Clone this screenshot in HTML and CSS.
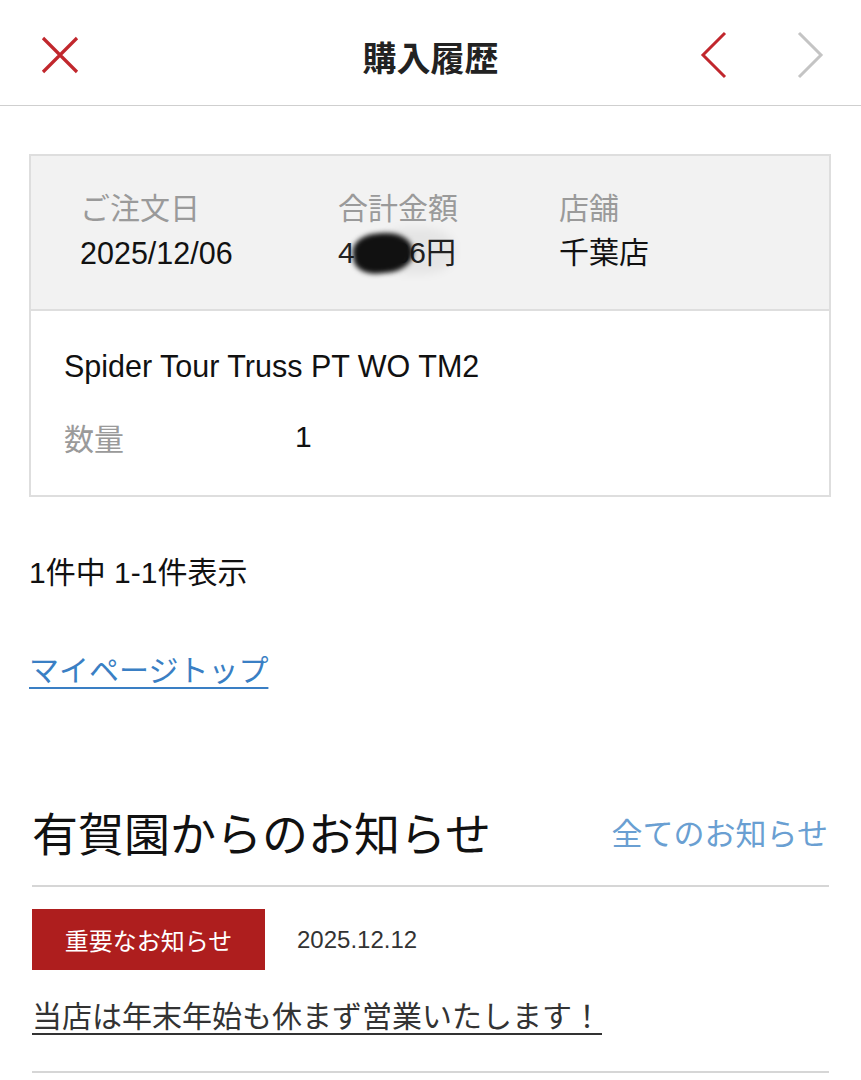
FILE: index.html
```html
<!DOCTYPE html>
<html lang="ja">
<head>
<meta charset="utf-8">
<link rel="stylesheet" href="styles.css">
</head>
<body>
<header class="topbar">
  <span class="icon-close">
    <svg width="38" height="38" viewBox="0 0 38 38"><path d="M2 2 L36 36 M36 2 L2 36" stroke="#c1272d" stroke-width="3.2" fill="none"/></svg>
  </span>
  <h1 class="title">購入履歴</h1>
  <div class="nav">
    <svg width="28" height="48" viewBox="0 0 28 48"><path d="M25 2 L3 24 L25 46" stroke="#c1272d" stroke-width="3" fill="none"/></svg>
    <svg width="28" height="48" viewBox="0 0 28 48"><path d="M3 2 L25 24 L3 46" stroke="#c4c4c4" stroke-width="3" fill="none"/></svg>
  </div>
</header>

<main class="content">
  <section class="order">
    <div class="order-head">
      <div class="col col-date">
        <div class="label">ご注文日</div>
        <div class="value">2025/12/06</div>
      </div>
      <div class="col col-total">
        <div class="label">合計金額</div>
        <div class="value"><span class="amount">4<span class="gap"></span>36円<span class="smudge"></span><span class="blob"></span></span></div>
      </div>
      <div class="col col-store">
        <div class="label">店舗</div>
        <div class="value">千葉店</div>
      </div>
    </div>
    <div class="order-body">
      <div class="product">Spider Tour Truss PT WO TM2</div>
      <div class="qty-row"><span class="label qty-label">数量</span><span class="qty">1</span></div>
    </div>
  </section>

  <p class="count">1件中 1-1件表示</p>
  <a class="mypage" href="#">マイページトップ</a>

  <section class="news">
    <div class="news-head">
      <h2 class="news-title">有賀園からのお知らせ</h2>
      <a class="news-all" href="#">全てのお知らせ</a>
    </div>
    <div class="news-item">
      <div class="news-meta">
        <span class="badge">重要なお知らせ</span>
        <span class="news-date">2025.12.12</span>
      </div>
      <a class="news-link" href="#">当店は年末年始も休まず営業いたします！</a>
    </div>
  </section>
</main>
</body>
</html>
```

FILE: styles.css
```css
* { box-sizing: border-box; }
html, body { margin: 0; padding: 0; background: #fff; }
body {
  width: 861px;
  font-family: "Liberation Sans", "Noto Sans CJK JP", sans-serif;
  color: #111;
}

.topbar {
  height: 106px;
  border-bottom: 1px solid #cfcfcf;
  display: flex;
  align-items: center;
  justify-content: space-between;
  padding: 0 37px 0 41px;
  position: relative;
}
.icon-close { display: flex; margin-top: 4px; }
.title {
  position: absolute;
  left: 0; right: 0;
  top: 34px;
  text-align: center;
  margin: 0;
  font-size: 34px;
  line-height: 46px;
  font-weight: 700;
  color: #222;
  font-family: "Noto Sans CJK JP", sans-serif;
  pointer-events: none;
}
.nav { display: flex; gap: 68px; align-items: center; margin-top: 4px; }

.content { padding: 48px 30px 0 29px; }

.order {
  border: 2px solid #dedede;
}
.order-head {
  background: #f2f2f2;
  border-bottom: 2px solid #dedede;
  height: 155px;
  display: flex;
  padding: 31px 0 0 49px;
}
.col-date { width: 258px; }
.col-total { width: 221px; }
.label {
  color: #9a9a9a;
  font-size: 30px;
  line-height: 38px;
  font-family: "Noto Sans CJK JP", sans-serif;
}
.value {
  font-size: 30px;
  line-height: 38px;
  margin-top: 9px;
  color: #111;
}
.col-date .value { font-size: 30.5px; }
.amount { position: relative; display: inline-block; color: #222; }
.gap { display: inline-block; width: 38px; }
.smudge {
  position: absolute;
  left: 40px;
  top: -6px;
  width: 76px;
  height: 46px;
  background: rgba(0,0,0,0.05);
  border-radius: 40%;
  filter: blur(4px);
}
.blob {
  position: absolute;
  left: 15px;
  top: -1px;
  width: 60px;
  height: 40px;
  background: #111;
  border-radius: 40% 50% 45% 40%;
  filter: blur(2.5px);
  transform: rotate(-6deg);
}

.order-body {
  padding: 35px 0 0 33px;
  height: 184px;
}
.product {
  font-size: 30.5px;
  line-height: 40px;
  color: #111;
}
.qty-row { display: flex; margin-top: 32px; align-items: center; }
.qty-label { width: 231px; }
.qty { font-size: 30px; line-height: 38px; }

.count {
  margin: 56px 0 0;
  font-size: 30px;
  line-height: 40px;
  color: #111;
}
.mypage {
  display: inline-block;
  margin-top: 55px;
  font-size: 30px;
  line-height: 40px;
  color: #3a7fc4;
  text-decoration: underline;
  text-underline-offset: 6px;
  text-decoration-thickness: 2px;
  font-family: "Noto Sans CJK JP", sans-serif;
  padding-right: 14px;
}

.news { margin-top: 115px; padding-left: 3px; padding-right: 2px; }
.news-head {
  display: flex;
  justify-content: space-between;
  align-items: center;
  padding-bottom: 26px;
  border-bottom: 2px solid #d6d6d6;
}
.news-title {
  margin: 0;
  font-size: 46px;
  font-weight: 400;
  line-height: 56px;
  color: #111;
  font-family: "Noto Sans CJK JP", sans-serif;
}
.news-all {
  font-size: 31px;
  color: #6a9fd2;
  text-decoration: none;
  font-family: "Noto Sans CJK JP", sans-serif;
  margin-right: 1px;
}
.news-item {
  padding-top: 22px;
  padding-bottom: 35px;
  border-bottom: 2px solid #d6d6d6;
}
.news-meta { display: flex; align-items: center; gap: 32px; }
.badge {
  display: inline-flex;
  align-items: center;
  justify-content: center;
  width: 233px;
  height: 61px;
  background: #ae1e1e;
  color: #fff;
  font-size: 24px;
  font-family: "Noto Sans CJK JP", sans-serif;
}
.news-date {
  font-size: 24px;
  color: #333;
  font-family: "Liberation Sans", sans-serif;
}
.news-link {
  display: inline-block;
  margin-top: 22px;
  font-size: 30px;
  line-height: 44px;
  color: #333;
  text-decoration: underline;
  text-underline-offset: 6px;
  text-decoration-thickness: 2px;
  font-family: "Noto Sans CJK JP", sans-serif;
  padding-right: 10px;
}
```
